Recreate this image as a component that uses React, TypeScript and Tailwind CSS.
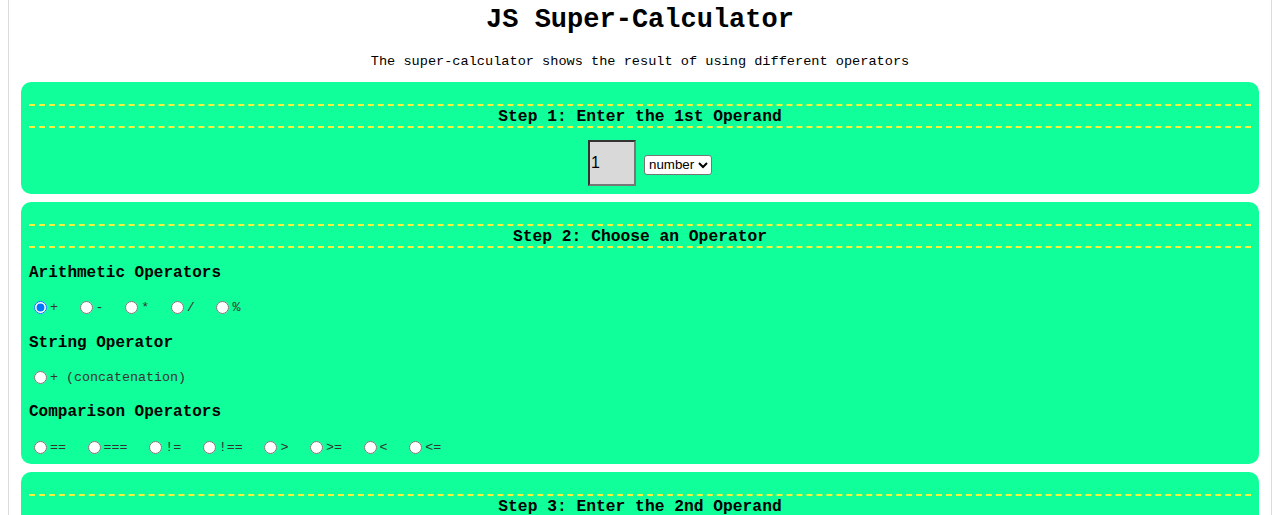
const mono = { fontFamily: '"Liberation Mono", "Courier New", monospace' }

const arithmetic = ['+', '-', '*', '/', '%']
const comparison = ['==', '===', '!=', '!==', '>', '>=', '<', '<=']

function Panel({ title, children }: { title: string; children?: React.ReactNode }) {
  return (
    <section className="bg-[#10ff9a] rounded-[10px] px-2 pt-2 pb-2">
      <h2 className="mt-[14px] border-y-2 border-dashed border-[#f7f03c] pt-[1px] text-center text-[16.3px] leading-[19px] font-bold text-black">
        {title}
      </h2>
      {children}
    </section>
  )
}

function RadioRow({ items, name, checked }: { items: string[]; name: string; checked?: string }) {
  return (
    <div className="flex items-center h-[16px]">
      {items.map(item => (
        <label key={item} className="flex items-center mr-[16.6px] text-[13.33px] text-[#333]">
          <input
            type="radio"
            name={name}
            defaultChecked={item === checked}
            className="ml-[5px] mr-[3px] w-[13px] h-[13px]"
          />
          <span className="mt-[2px]">{item}</span>
        </label>
      ))}
    </div>
  )
}

export default function App() {
  return (
    <div className="bg-white min-h-screen px-2" style={mono}>
      <main className="border-x border-[#dcdcdc] px-3 pb-4">
        <h1 className="pt-[5px] text-center text-[27px] leading-[31px] font-bold text-black">
          JS Super-Calculator
        </h1>
        <p className="mt-[18px] text-center text-[13.6px] leading-[16px] text-black">
          The super-calculator shows the result of using different operators
        </p>
        <div className="mt-[12px] flex flex-col gap-2">
          <Panel title="Step 1: Enter the 1st Operand">
            <div className="mt-[12px] pl-[20px] flex justify-center items-center gap-2">
              <input
                type="text"
                defaultValue="1"
                className="w-[48px] h-[46px] bg-[#d9d9d9] border-2 border-t-[#333] border-l-[#333] border-b-[#777] border-r-[#777] pl-[1px] text-[16px] text-black"
                style={{ fontFamily: 'Arial, "Liberation Sans", sans-serif' }}
              />
              <select
                defaultValue="number"
                className="mt-[3px] h-[20px] bg-white border border-[#767676] rounded-[3px] text-[13.33px] text-black"
                style={{ fontFamily: 'Arial, "Liberation Sans", sans-serif' }}
              >
                <option value="number">number</option>
                <option value="string">string</option>
              </select>
            </div>
          </Panel>

          <Panel title="Step 2: Choose an Operator">
            <h3 className="mt-4 text-[16px] leading-[19px] font-bold text-black">Arithmetic Operators</h3>
            <div className="mt-4">
              <RadioRow items={arithmetic} name="op" checked="+" />
            </div>
            <h3 className="mt-[19px] text-[16px] leading-[19px] font-bold text-black">String Operator</h3>
            <div className="mt-4">
              <RadioRow items={['+ (concatenation)']} name="op" />
            </div>
            <h3 className="mt-[18px] text-[16px] leading-[19px] font-bold text-black">Comparison Operators</h3>
            <div className="mt-[17px] mb-[1px]">
              <RadioRow items={comparison} name="op" />
            </div>
          </Panel>

          <Panel title="Step 3: Enter the 2nd Operand">
            <div className="h-[60px]" />
          </Panel>
        </div>
      </main>
    </div>
  )
}
